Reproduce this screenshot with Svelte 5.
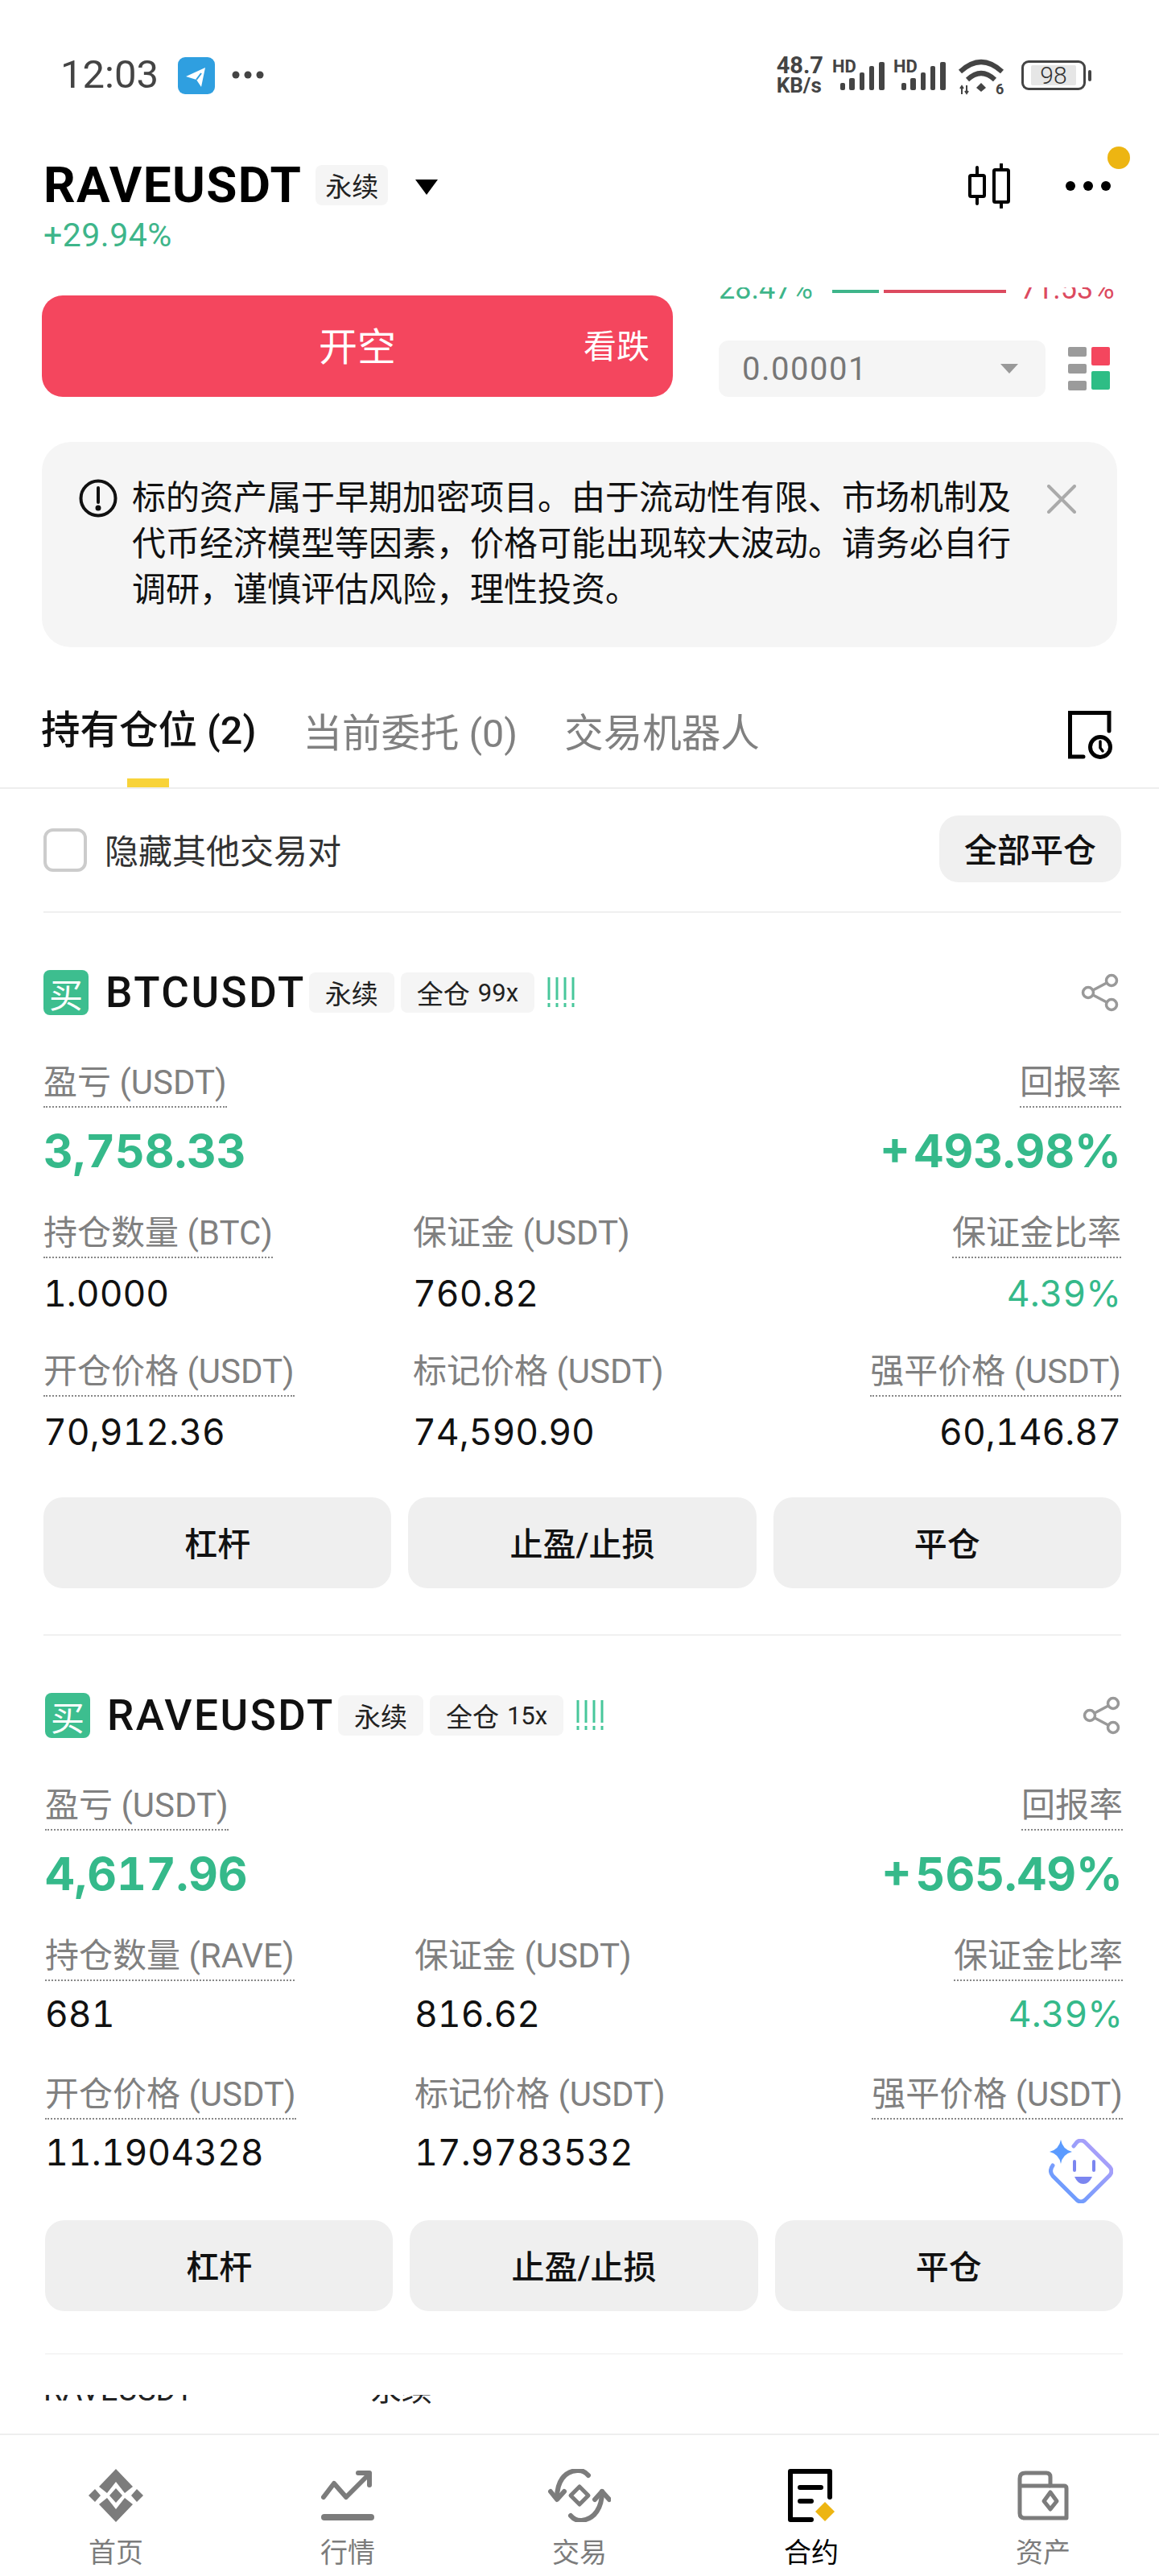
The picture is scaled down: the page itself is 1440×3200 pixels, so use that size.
<script>
  const noticeLines = [
    "标的资产属于早期加密项目。由于流动性有限、市场机制及",
    "代币经济模型等因素，价格可能出现较大波动。请务必自行",
    "调研，谨慎评估风险，理性投资。",
  ];

  const positions = [
    {
      symbol: "BTCUSDT", lev: "99x", unit: "BTC", pnl: "3,758.33", roe: "+ 493.98%",
      size: "1.0000", margin: "760.82", ratio: "4.39%",
      entry: "70,912.36", mark: "74,590.90", liq: "60,146.87",
    },
    {
      symbol: "RAVEUSDT", lev: "15x", unit: "RAVE", pnl: "4,617.96", roe: "+ 565.49%",
      size: "681", margin: "816.62", ratio: "4.39%",
      entry: "11.1904328", mark: "17.9783532", liq: "",
    },
  ];

  const tabs = ["首页", "行情", "交易", "合约", "资产"];
</script>

<div class="page">
  <div class="status">
    <span class="time">12:03</span>
    <svg class="tg" width="46" height="46" viewBox="0 0 46 46">
      <rect width="46" height="46" rx="9" fill="#2F9FE0" />
      <path d="M10 24 L34 13 L29 37 L23 28 Z" fill="#fff" />
      <path d="M23 28 L29 20" stroke="#2F9FE0" stroke-width="2" />
    </svg>
    <svg class="more" width="40" height="10" viewBox="0 0 40 10" fill="#444">
      <circle cx="5" cy="5" r="4.5" /><circle cx="20" cy="5" r="4.5" /><circle cx="35" cy="5" r="4.5" />
    </svg>
    <div class="status-right">
      <div class="speed"><span>48.7</span><span class="kb">KB/s</span></div>
      {#each [0, 1] as i}
        <svg class="signal" width="65" height="42" viewBox="0 0 65 42" fill="#444">
          <text x="0" y="18" class="hd">HD</text>
          <rect x="10" y="31" width="6" height="9" rx="2" />
          <rect x="21" y="25" width="7" height="15" rx="2" />
          <rect x="34" y="18" width="6" height="22" rx="2" />
          <rect x="46" y="10" width="6" height="30" rx="2" />
          <rect x="58" y="5" width="7" height="35" rx="2" />
        </svg>
      {/each}
      <svg class="wifi" width="58" height="46" viewBox="0 0 58 46" fill="none" stroke="#444" stroke-width="6">
        <path d="M3 17 Q29 -7 55 17" />
        <path d="M12 27 Q29 11 46 27" />
        <path d="M29 31 L35 37 L29 42 L23 37 Z" fill="#444" stroke="none" />
        <path d="M5 45 V35 M3 38 L5 35 L7 38 M11 34 V44 M9 41 L11 44 L13 41" stroke-width="2" />
        <text x="47" y="45" class="six">6</text>
      </svg>
      <div class="battery">
        <div class="cell"><span>98</span></div>
        <div class="nub"></div>
      </div>
    </div>
  </div>

  <div class="head">
    <div class="title-row">
      <span class="title">RAVEUSDT</span>
      <span class="chip big">永续</span>
      <svg class="caret" width="30" height="20" viewBox="0 0 30 20"><path d="M1 1 H29 L15 20 Z" fill="#000" /></svg>
      <div class="head-icons">
        <svg width="52" height="56" viewBox="0 0 52 56" fill="none" stroke="#000" stroke-width="4" stroke-linecap="round">
          <rect x="2" y="15" width="18" height="26" rx="1.5" />
          <path d="M11 5 V15 M11 41 V50" />
          <rect x="32" y="8" width="18" height="40" rx="1.5" />
          <path d="M41 1 V8 M41 48 V55" />
        </svg>
        <div class="menu">
          <svg width="56" height="14" viewBox="0 0 56 14" fill="#000">
            <circle cx="6" cy="7" r="6" /><circle cx="28" cy="7" r="6" /><circle cx="50" cy="7" r="6" />
          </svg>
          <span class="dot"></span>
        </div>
      </div>
    </div>
    <div class="change">+29.94%</div>
  </div>

  <div class="order">
    <div class="short">
      <span class="short-main">开空</span>
      <span class="short-side">看跌</span>
    </div>
    <div class="book">
      <div class="ratio">
        <span class="pct up">28.47%</span>
        <span class="bar up-bar"></span>
        <span class="bar down-bar"></span>
        <span class="pct down">71.53%</span>
      </div>
      <div class="book-row">
        <div class="select">
          <span>0.00001</span>
          <svg width="22" height="12" viewBox="0 0 22 12"><path d="M0 0 H22 L11 12 Z" fill="#999" /></svg>
        </div>
        <div class="layout-icon">
          <div class="greys"><i></i><i></i><i></i></div>
          <div class="colors"><i class="r"></i><i class="g"></i></div>
        </div>
      </div>
    </div>
  </div>

  <div class="notice">
    <svg class="notice-icon" width="48" height="48" viewBox="0 0 48 48" fill="none" stroke="#111" stroke-width="4">
      <circle cx="24" cy="24" r="21.5" />
      <path d="M24 11 V29" stroke-linecap="round" />
      <circle cx="24" cy="36" r="1.5" fill="#111" />
    </svg>
    <div class="notice-text">
      {#each noticeLines as line}
        <div>{line}</div>
      {/each}
    </div>
    <svg class="close" width="36" height="36" viewBox="0 0 36 36" stroke="#aaa" stroke-width="4" stroke-linecap="round">
      <path d="M2 2 L34 34 M34 2 L2 34" />
    </svg>
  </div>

  <div class="tabs">
    <span class="tab active">持有仓位 (2)</span>
    <span class="tab">当前委托 (0)</span>
    <span class="tab">交易机器人</span>
    <svg class="history" width="56" height="60" viewBox="0 0 56 60" fill="none" stroke="#000" stroke-width="5" stroke-linecap="round">
      <path d="M19 57 H2.5 V2.5 H51 V25" />
      <circle cx="40" cy="45" r="12.5" />
      <path d="M40 38 V46 L43 50" stroke-width="3.5" />
    </svg>
    <span class="indicator"></span>
  </div>

  <div class="filter">
    <span class="check"></span>
    <span class="filter-label">隐藏其他交易对</span>
    <span class="close-all">全部平仓</span>
  </div>

  {#each positions as p, i}
    <div class="position" class:second={i === 1}>
      <div class="pos-head">
        <span class="buy">买</span>
        <span class="symbol">{p.symbol}</span>
        <span class="chip">永续</span>
        <span class="chip">全仓 <em>{p.lev}</em></span>
        <svg class="risk" width="40" height="38" viewBox="0 0 40 38" stroke="#48C79B" stroke-width="3">
          {#each [2, 12, 22, 32] as x}
            <path d="M{x} 0 V28 M{x} 32 V37" />
          {/each}
        </svg>
        <svg class="share" width="48" height="48" viewBox="0 0 48 48" fill="none" stroke="#999" stroke-width="3.5">
          <circle cx="9" cy="24" r="6.5" /><circle cx="38" cy="9" r="6.5" /><circle cx="38" cy="39" r="6.5" />
          <path d="M15 21 L32 12 M15 27 L32 36" />
        </svg>
      </div>

      <div class="pnl">
        <div>
          <span class="label dotted">盈亏 (USDT)</span>
          <div class="pnl-value">{p.pnl}</div>
        </div>
        <div class="right">
          <span class="label dotted">回报率</span>
          <div class="pnl-value">{p.roe}</div>
        </div>
      </div>

      <div class="metrics">
        <div>
          <span class="label dotted">持仓数量 ({p.unit})</span>
          <div class="value">{p.size}</div>
        </div>
        <div>
          <span class="label">保证金 (USDT)</span>
          <div class="value">{p.margin}</div>
        </div>
        <div class="right">
          <span class="label dotted">保证金比率</span>
          <div class="value green">{p.ratio}</div>
        </div>
        <div>
          <span class="label dotted">开仓价格 (USDT)</span>
          <div class="value">{p.entry}</div>
        </div>
        <div>
          <span class="label">标记价格 (USDT)</span>
          <div class="value">{p.mark}</div>
        </div>
        <div class="right">
          <span class="label dotted">强平价格 (USDT)</span>
          <div class="value">{p.liq}</div>
        </div>
        {#if i === 1}
          <svg class="bot" width="80" height="80" viewBox="0 0 80 80" fill="none">
            <defs>
              <linearGradient id="botStroke" x1="0" y1="1" x2="1" y2="0">
                <stop offset="0" stop-color="#5B9BFF" />
                <stop offset="1" stop-color="#BBA0F8" />
              </linearGradient>
            </defs>
            <path d="M31 9 L35 4 Q40 0 45 4 L76 35 Q80 40 76 45 L45 76 Q40 80 35 76 L5 46 Q0 40 5 33" stroke="url(#botStroke)" stroke-width="5" stroke-linecap="round" />
            <path d="M15 1 Q17 13 29 16 Q17 19 15 31 Q13 19 1 16 Q13 13 15 1 Z" fill="#5B9BFF" />
            <path d="M32 28 V39 M56 28 V39" stroke="#7B86F0" stroke-width="4" stroke-linecap="round" />
            <path d="M32 47 H54 Q50 56 43 56 Q36 56 32 47 Z" fill="#7B86F0" />
          </svg>
        {/if}
      </div>

      <div class="actions">
        <span class="action">杠杆</span>
        <span class="action">止盈/止损</span>
        <span class="action">平仓</span>
      </div>
    </div>
  {/each}

  <div class="ghost">
    <span>RAVEUSDT</span>
    <span class="ghost-chip">永续</span>
  </div>

  <nav class="nav">
    {#each tabs as t, i}
      <div class="nav-item" class:current={i === 3}>
        <div class="nav-icon">
          {#if i === 0}
            <svg width="68" height="66" viewBox="0 0 68 66" fill="#7c7c7c">
              <path d="M34 0 L55 22 L45 30 L34 16 L23 30 L13 22 Z" />
              <path d="M34 66 L55 44 L45 36 L34 50 L23 36 L13 44 Z" />
              <path d="M8 25 L15 33 L8 41 L0 33 Z M60 25 L68 33 L60 41 L53 33 Z M34 24 L42 33 L34 42 L26 33 Z" />
            </svg>
          {:else if i === 1}
            <svg width="66" height="66" viewBox="0 0 66 66" fill="none" stroke="#7c7c7c" stroke-width="6" stroke-linecap="round" stroke-linejoin="round">
              <path d="M3 35 L16 18 L31 35 L60 6" />
              <path d="M46 5 H60 V20" />
              <path d="M4 60 H62" stroke-width="8" />
            </svg>
          {:else if i === 2}
            <svg width="78" height="66" viewBox="0 0 78 66" fill="none" stroke="#7c7c7c" stroke-width="6" stroke-linecap="round" stroke-linejoin="round">
              <path d="M50 8 Q44 1 36 2 C20 3 11 16 11 36" />
              <path d="M3 28 L11 38 L20 28" />
              <path d="M28 58 Q34 65 42 64 C58 62 67 48 67 28" />
              <path d="M58 38 L67 28 L76 38" />
              <path d="M39 22 L50 33 L39 44 L28 33 Z" stroke-width="5" />
            </svg>
          {:else if i === 3}
            <svg width="58" height="66" viewBox="0 0 58 66" fill="none" stroke="#000" stroke-width="6" stroke-linecap="round">
              <path d="M29 63 H3 V3 H52 V35" stroke-linejoin="round" />
              <path d="M15 23 H41 M15 40 H29" />
              <path d="M46 41 L58 53 L46 65 L34 53 Z" fill="#EDB512" stroke="none" />
            </svg>
          {:else}
            <svg width="64" height="62" viewBox="0 0 64 62" fill="none" stroke="#7c7c7c" stroke-width="5" stroke-linejoin="round">
              <path d="M3 10 Q3 3 10 3 H36 Q41 3 41 8 V19 H58 Q61 19 61 22 V59 H9 Q3 59 3 53 Z" />
              <path d="M3 19 H41" />
              <path d="M41 27 L49 38 L41 48 L33 38 Z" />
            </svg>
          {/if}
        </div>
        <span class="nav-label">{t}</span>
      </div>
    {/each}
  </nav>
</div>

<style>
  :global(body) {
    margin: 0;
    background: #fff;
  }

  .page {
    width: 1440px;
    height: 3200px;
    overflow: hidden;
    background: #fff;
    color: #111;
    font-family: Roboto, "Noto Sans CJK SC", sans-serif;
  }

  /* status bar */
  .status {
    height: 196px;
    box-sizing: border-box;
    padding: 68px 84px 0 75px;
    display: flex;
    align-items: flex-start;
  }
  .time {
    font-size: 49px;
    line-height: 50px;
    color: #444;
  }
  .tg {
    margin: 3px 0 0 24px;
  }
  .more {
    margin: 20px 0 0 21px;
  }
  .status-right {
    margin-left: auto;
    display: flex;
    align-items: flex-start;
    gap: 11px;
    color: #444;
  }
  .speed {
    display: flex;
    flex-direction: column;
    font-size: 29px;
    font-weight: 700;
    line-height: 25px;
    margin-top: 1px;
  }
  .kb {
    font-size: 26px;
  }
  .signal {
    margin-top: 4px;
  }
  .hd {
    font: 700 22px Roboto, sans-serif;
  }
  .wifi {
    margin: 4px 10px 0 4px;
  }
  .six {
    font: 700 18px Roboto, sans-serif;
    fill: #444;
    stroke: none;
  }
  .battery {
    margin-top: 7px;
    display: flex;
    align-items: center;
    gap: 3px;
  }
  .cell {
    width: 80px;
    height: 37px;
    box-sizing: border-box;
    border: 3px solid #444;
    border-radius: 9px;
    padding: 3px 9px;
    display: flex;
  }
  .cell span {
    flex: 1;
    background: #e6e6e6;
    border-radius: 2px;
    font-size: 30px;
    line-height: 25px;
    font-weight: 300;
    text-align: center;
    color: #333;
  }
  .nub {
    width: 4px;
    height: 14px;
    background: #444;
    border-radius: 2px;
  }

  /* market header */
  .head {
    height: 161px;
    padding: 0 60px 0 54px;
  }
  .title-row {
    display: flex;
    align-items: center;
    height: 68px;
  }
  .title {
    font-size: 62px;
    font-weight: 700;
    line-height: 68px;
    letter-spacing: 1.4px;
    color: #000;
  }
  .chip {
    display: inline-flex;
    align-items: center;
    height: 50px;
    padding: 0 20px;
    border-radius: 8px;
    background: #f5f5f5;
    font-size: 33px;
    color: #222;
    white-space: nowrap;
  }
  .chip em {
    font-style: normal;
    font-size: 31px;
    margin-left: 10px;
  }
  .big {
    margin-left: 17px;
    padding: 0 12px;
  }
  .caret {
    margin: 4px 0 0 33px;
  }
  .head-icons {
    margin-left: auto;
    display: flex;
    align-items: center;
    gap: 69px;
    margin-top: 2px;
  }
  .menu {
    position: relative;
    display: flex;
  }
  .dot {
    position: absolute;
    right: -24px;
    top: -42px;
    width: 28px;
    height: 28px;
    border-radius: 50%;
    background: #edb512;
  }
  .change {
    margin-top: 4px;
    font-size: 41px;
    line-height: 48px;
    letter-spacing: 0.5px;
    color: #3eb58a;
  }

  /* order row */
  .order {
    display: flex;
    padding: 0 52px;
    height: 136px;
  }
  .short {
    width: 784px;
    height: 126px;
    margin-top: 10px;
    padding-bottom: 6px;
    box-sizing: border-box;
    border-radius: 26px;
    background: #f4465e;
    color: #fff;
    display: flex;
    align-items: center;
    position: relative;
    justify-content: center;
  }
  .short-main {
    font-size: 48px;
  }
  .short-side {
    position: absolute;
    right: 29px;
    font-size: 41px;
  }
  .book {
    margin-left: 57px;
    flex: 1;
  }
  .ratio {
    height: 16px;
    overflow: hidden;
    display: flex;
    align-items: flex-end;
  }
  .pct {
    font-size: 36px;
    line-height: 38px;
    height: 38px;
    margin-bottom: -5px;
    flex-shrink: 0;
  }
  .up {
    color: #3eb58a;
  }
  .down {
    color: #dc4a5f;
    margin-left: 18px;
  }
  .bar {
    height: 4px;
    margin-bottom: 9px;
  }
  .up-bar {
    width: 58px;
    background: #3eb58a;
    margin-left: 24px;
  }
  .down-bar {
    width: 152px;
    background: #dc4a5f;
    margin-left: 6px;
  }
  .book-row {
    display: flex;
    align-items: center;
    margin-top: 50px;
  }
  .select {
    width: 406px;
    height: 70px;
    box-sizing: border-box;
    padding: 0 34px 0 29px;
    background: #f5f5f5;
    border-radius: 12px;
    display: flex;
    align-items: center;
    justify-content: space-between;
    font-size: 40px;
    letter-spacing: 1.5px;
    color: #777;
  }
  .layout-icon {
    margin-left: 28px;
    display: flex;
    gap: 6px;
  }
  .greys {
    display: flex;
    flex-direction: column;
    gap: 9px;
  }
  .greys i {
    width: 23px;
    height: 12px;
    border-radius: 2px;
    background: #9b9b9b;
  }
  .colors {
    display: flex;
    flex-direction: column;
    gap: 7px;
  }
  .colors i {
    width: 23px;
    height: 23px;
    border-radius: 2px;
  }
  .colors .r {
    background: #f4465e;
  }
  .colors .g {
    background: #2ebd85;
  }

  /* notice */
  .notice {
    margin: 56px 52px 0 52px;
    height: 255px;
    box-sizing: border-box;
    padding: 46px 0 0 46px;
    background: #f5f5f5;
    border-radius: 36px;
    display: flex;
    align-items: flex-start;
  }
  .notice-text {
    margin: -5px 0 0 18px;
    width: 1110px;
    font-size: 42px;
    line-height: 57px;
    color: #111;
  }
  .close {
    margin: 7px 0 0 27px;
  }

  /* tabs */
  .tabs {
    position: relative;
    height: 174px;
    border-bottom: 2px solid #eee;
    padding: 0 57px 0 51px;
    display: flex;
    align-items: flex-start;
  }
  .tab {
    margin-top: 76px;
    font-size: 48.5px;
    line-height: 64px;
    color: #808080;
    margin-right: 58px;
    white-space: nowrap;
  }
  .active {
    margin-top: 72px;
    color: #111;
    font-weight: 500;
  }
  .history {
    margin: 79px 0 0 auto;
  }
  .indicator {
    position: absolute;
    left: 158px;
    bottom: 0;
    width: 52px;
    height: 11px;
    background: #f8d33a;
  }

  /* filter row */
  .filter {
    height: 152px;
    margin: 0 47px 0 54px;
    border-bottom: 2px solid #f0f0f0;
    display: flex;
    align-items: center;
  }
  .check {
    width: 54px;
    height: 54px;
    box-sizing: border-box;
    border: 4px solid #ccc;
    border-radius: 12px;
  }
  .filter-label {
    margin: 0 0 4px 22px;
    font-size: 42px;
    color: #333;
  }
  .close-all {
    margin: 0 0 4px auto;
    width: 226px;
    height: 83px;
    box-sizing: border-box;
    padding-bottom: 2px;
    border-radius: 24px;
    background: #f0f0f0;
    display: flex;
    align-items: center;
    justify-content: center;
    font-size: 41px;
    font-weight: 500;
  }

  /* position cards */
  .position {
    margin: 0 47px 0 54px;
    padding-top: 71px;
    height: 898px;
    box-sizing: border-box;
    border-bottom: 2px solid #f0f0f0;
  }
  .second {
    margin: 0 45px 0 56px;
    height: 893px;
    border-bottom-color: #f5f5f5;
  }
  .second .value {
    margin: 11px 0 3px;
  }
  .pos-head {
    height: 56px;
    display: flex;
    align-items: center;
    gap: 8px;
  }
  .buy {
    width: 56px;
    height: 56px;
    border-radius: 8px;
    background: #3dbe8f;
    color: #fff;
    display: flex;
    align-items: center;
    justify-content: center;
    font-size: 42px;
    margin-right: 13px;
  }
  .symbol {
    font-size: 53px;
    font-weight: 500;
    letter-spacing: 2.5px;
    color: #111;
    margin-right: -4px;
  }
  .risk {
    margin-left: 8px;
  }
  .share {
    margin-left: auto;
    margin-right: 2px;
  }
  .pnl {
    margin-top: 59px;
    display: flex;
    justify-content: space-between;
  }
  .label {
    display: inline-block;
    box-sizing: border-box;
    height: 56px;
    font-size: 42px;
    line-height: 50px;
    color: #808080;
    white-space: nowrap;
  }
  .dotted {
    border-bottom: 2px dotted #888;
  }
  .pnl-value {
    margin-top: 19px;
    font-family: Inter, Roboto, sans-serif;
    font-variant-numeric: tabular-nums;
    font-size: 57px;
    line-height: 70px;
    font-weight: 700;
    word-spacing: -10px;
    color: #35b98a;
  }
  .right {
    text-align: right;
  }
  .metrics {
    position: relative;
    margin-top: 42px;
    display: grid;
    grid-template-columns: 459px 1fr auto;
    row-gap: 42px;
  }
  .value {
    margin-top: 14px;
    height: 60px;
    font-family: Inter, Roboto, sans-serif;
    font-variant-numeric: tabular-nums;
    font-size: 44.5px;
    line-height: 60px;
    color: #111;
  }
  .green {
    color: #35b98a;
  }
  .bot {
    position: absolute;
    right: 12px;
    bottom: -30px;
  }
  .actions {
    margin-top: 51px;
    display: flex;
    gap: 21px;
  }
  .action {
    flex: 1;
    height: 113px;
    box-sizing: border-box;
    padding-bottom: 4px;
    border-radius: 24px;
    background: #efefef;
    display: flex;
    align-items: center;
    justify-content: center;
    font-size: 41px;
    font-weight: 500;
    color: #111;
  }

  /* clipped row above the tab bar */
  .ghost {
    height: 14px;
    margin: 50px 0 0 54px;
    overflow: hidden;
    display: flex;
    align-items: flex-end;
    font-size: 38px;
    line-height: 40px;
    white-space: nowrap;
    color: #222;
  }
  .ghost span {
    flex-shrink: 0;
    height: 40px;
  }
  .ghost-chip {
    margin-left: 220px;
  }

  /* bottom nav */
  .nav {
    margin-top: 34px;
    height: 175px;
    border-top: 2px solid #eee;
    display: grid;
    grid-template-columns: repeat(5, 288px);
  }
  .nav-item {
    display: flex;
    flex-direction: column;
    align-items: center;
    color: #7c7c7c;
    padding-top: 42px;
  }
  .current {
    color: #000;
  }
  .nav-icon {
    height: 66px;
    display: flex;
    align-items: center;
  }
  .nav-label {
    margin-top: 14px;
    font-size: 34px;
    line-height: 48px;
  }
</style>
